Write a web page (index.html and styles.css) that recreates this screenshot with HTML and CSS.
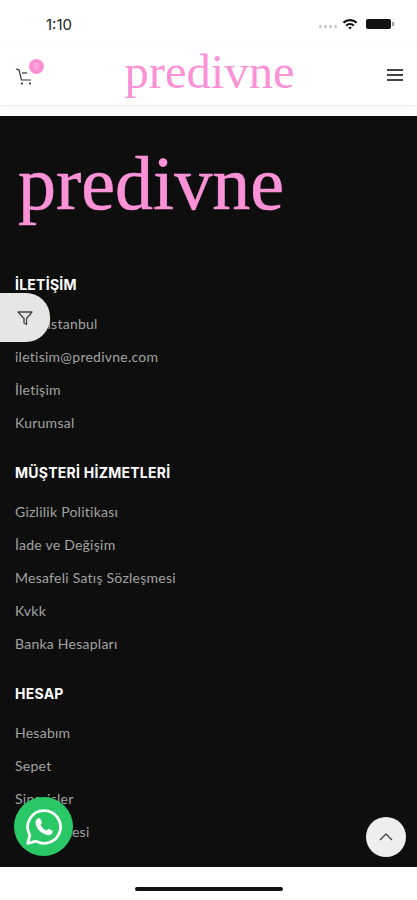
FILE: index.html
```html
<!DOCTYPE html>
<html>
<head>
  <title>predivne</title>
  <link rel="stylesheet" href="styles.css">
</head>
<body>
  <div class="page">
    <div class="status-bar">
      <span class="time">1:10</span>
      <div class="status-icons">
        <span class="signal"><i></i><i></i><i></i><i></i></span>
        <svg class="wifi" width="16" height="12" viewBox="0 0 16 12">
          <path d="M0.6 4 A10.5 10.5 0 0 1 15.4 4 L13.8 5.6 A8.2 8.2 0 0 0 2.2 5.6 Z" fill="#111"/>
          <path d="M3.4 6.8 A6.6 6.6 0 0 1 12.6 6.8 L11 8.4 A4.3 4.3 0 0 0 5 8.4 Z" fill="#111"/>
          <path d="M6.2 9.6 A2.6 2.6 0 0 1 9.8 9.6 L8 11.6 Z" fill="#111"/>
        </svg>
        <span class="battery"><span class="battery-fill"></span></span>
      </div>
    </div>

    <header class="top-bar">
      <div class="cart">
        <svg width="20" height="20" viewBox="0 0 20 20" fill="none" stroke="#333" stroke-width="1.2">
          <path d="M1 2 L4 2.8 L6.5 13 H16"/>
          <path d="M7 6 H12"/>
          <circle cx="7" cy="16.5" r="1.1" fill="#333" stroke="none"/>
          <circle cx="15" cy="16.5" r="1.1" fill="#333" stroke="none"/>
        </svg>
        <span class="cart-badge">0</span>
      </div>
      <span class="logo-small">predivne</span>
      <div class="menu-icon"><i></i><i></i><i></i></div>
    </header>

    <footer class="footer">
      <div class="logo-big">predivne</div>

      <h4 class="first-title">İLETİŞİM</h4>
      <ul>
        <li>Şişli, İstanbul</li>
        <li>iletisim@predivne.com</li>
        <li>İletişim</li>
        <li>Kurumsal</li>
      </ul>

      <h4>MÜŞTERİ HİZMETLERİ</h4>
      <ul>
        <li>Gizlilik Politikası</li>
        <li>İade ve Değişim</li>
        <li>Mesafeli Satış Sözleşmesi</li>
        <li>Kvkk</li>
        <li>Banka Hesapları</li>
      </ul>

      <h4>HESAP</h4>
      <ul>
        <li>Hesabım</li>
        <li>Sepet</li>
        <li>Siparişler</li>
        <li>İstek Listesi</li>
      </ul>
    </footer>

    <div class="home-area"><span class="home-bar"></span></div>

    <div class="filter-tab">
      <svg width="18" height="18" viewBox="0 0 18 18" fill="none" stroke="#444" stroke-width="1.3" stroke-linejoin="round">
        <path d="M2 3 H16 L10.5 9.5 V15.5 L8 14 V9.5 Z"/>
      </svg>
    </div>

    <div class="whatsapp">
      <svg width="40" height="40" viewBox="0 0 38 38">
        <path d="M19 3.5 A15.5 15.5 0 0 0 5.6 26.8 L3.5 34.5 L11.4 32.4 A15.5 15.5 0 1 0 19 3.5 Z" fill="none" stroke="#fff" stroke-width="2.6" stroke-linejoin="round"/>
        <path d="M13.5 10.8 L15.2 10.8 L17.2 14.8 L15.6 16.8 C16.8 19.2 18.8 21.2 21.4 22.4 L23.4 20.6 L27.4 22.8 C27.4 25 25.6 26.8 23.4 26.8 C17 26.6 11 20.4 11 14.6 C11 12.8 12 11.4 13.5 10.8 Z" fill="#fff"/>
      </svg>
    </div>

    <div class="to-top">
      <svg width="16" height="10" viewBox="0 0 16 10" fill="none" stroke="#444" stroke-width="1.4">
        <path d="M2 8 L8 2 L14 8"/>
      </svg>
    </div>
  </div>
</body>
</html>
```

FILE: styles.css
```css
* {
  box-sizing: border-box;
}

body {
  margin: 0;
  background-color: #fff;
  font-family: "Lato", "Liberation Sans", sans-serif;
}

.page {
  position: relative;
  width: 417px;
  height: 900px;
  overflow: hidden;
  display: flex;
  flex-direction: column;
}

.status-bar {
  height: 45px;
  display: flex;
  align-items: center;
  justify-content: space-between;
  padding: 3px 26px 0 46px;
}

.time {
  font-family: "Inter", sans-serif;
  font-size: 15px;
  color: #222;
}

.status-icons {
  display: flex;
  align-items: center;
  gap: 5px;
}

.signal {
  display: flex;
  gap: 2px;
  margin-top: 5px;
}

.signal i {
  width: 3px;
  height: 3px;
  border-radius: 50%;
  background-color: #c4c4c4;
}

.battery {
  position: relative;
  width: 25px;
  height: 10px;
  background-color: #111;
  border-radius: 2px;
  margin-left: 3px;
}

.battery-fill {
  position: absolute;
  right: -3px;
  top: 3px;
  width: 2px;
  height: 4px;
  background-color: #999;
}

.top-bar {
  height: 60px;
  display: flex;
  align-items: center;
  justify-content: space-between;
  padding: 0 14px 0 15px;
  box-shadow: 0 1px 3px rgba(0, 0, 0, 0.1);
}

.cart {
  position: relative;
  width: 29px;
  height: 20px;
  margin-top: 4px;
}

.cart-badge {
  position: absolute;
  top: -8px;
  right: 0;
  width: 15px;
  height: 15px;
  border-radius: 50%;
  background-color: #fb8fd6;
  color: #fdd;
  font-size: 7px;
  line-height: 15px;
  text-align: center;
}

.logo-small {
  font-family: "Liberation Serif", serif;
  font-size: 48.6px;
  line-height: 60px;
  color: #fb92d8;
  margin: -6px 12px 0 0;
}

.menu-icon {
  width: 16px;
  display: flex;
  flex-direction: column;
  gap: 3px;
}

.menu-icon i {
  height: 2px;
  background-color: #444;
}

.footer {
  margin-top: 11px;
  height: 751px;
  background-color: #0e0e0e;
  padding: 22px 15px 0;
  overflow: hidden;
}

.logo-big {
  font-family: "Liberation Serif", serif;
  font-size: 76px;
  line-height: 90px;
  color: #fb92d8;
  -webkit-text-stroke: 0.6px #fb92d8;
  padding-left: 3px;
}

h4 {
  margin: 0;
  height: 20px;
  font-family: "Inter", sans-serif;
  font-size: 14px;
  font-weight: 700;
  line-height: 20px;
  letter-spacing: 0.25px;
  color: #fff;
}

.first-title {
  margin-top: 47px;
}

ul {
  list-style: none;
  margin: 12px 0 24px;
  padding: 0;
}

li {
  height: 33px;
  font-size: 14px;
  line-height: 33px;
  letter-spacing: 0.25px;
  color: #a2a2a2;
}

.home-area {
  flex: 1;
  display: flex;
  justify-content: center;
  padding-top: 20px;
}

.home-bar {
  width: 148px;
  height: 4px;
  border-radius: 2px;
  background-color: #111;
}

.filter-tab {
  position: absolute;
  left: 0;
  top: 293px;
  width: 50px;
  height: 49px;
  background-color: rgba(238, 238, 236, 0.96);
  border-radius: 0 24px 24px 0;
  display: flex;
  align-items: center;
  justify-content: center;
}

.whatsapp {
  position: absolute;
  left: 14px;
  top: 797px;
  width: 59px;
  height: 59px;
  border-radius: 50%;
  background-color: #29c765;
  display: flex;
  align-items: center;
  justify-content: center;
}

.to-top {
  position: absolute;
  left: 366px;
  top: 817px;
  width: 40px;
  height: 40px;
  border-radius: 50%;
  background-color: #eeeeee;
  display: flex;
  align-items: center;
  justify-content: center;
}
```
